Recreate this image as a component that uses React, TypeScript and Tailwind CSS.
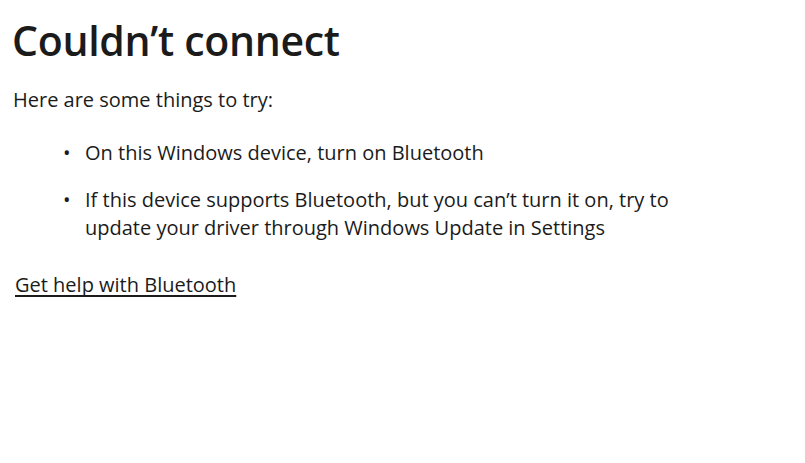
export default function App() {
  return (
    <div
      className="min-h-screen w-full bg-white text-[#1b1b1b] pl-[12px] pt-[14px]"
      style={{ fontFamily: '"Open Sans", "Noto Sans", sans-serif' }}
    >
      <h1 className="text-[41px] leading-[52px] font-semibold tracking-[-0.3px]">Couldn’t connect</h1>
      <p className="mt-[20px] ml-[1px] text-[20px] leading-[28px]">Here are some things to try:</p>
      <ul className="mt-[25px] ml-[51px] flex flex-col gap-[19px] text-[20px] leading-[28px] max-w-[627px]">
        <li className="flex">
          <span className="w-[22px] shrink-0">•</span>
          <span>On this Windows device, turn on Bluetooth</span>
        </li>
        <li className="flex">
          <span className="w-[22px] shrink-0">•</span>
          <span>
            If this device supports Bluetooth, but you can’t turn it on, try to update your driver through Windows
            Update in Settings
          </span>
        </li>
      </ul>
      <a
        href="#"
        className="inline-block mt-[29px] ml-[3px] text-[20px] leading-[28px] underline underline-offset-[3px] [text-decoration-skip-ink:none]"
      >
        Get help with Bluetooth
      </a>
    </div>
  );
}
